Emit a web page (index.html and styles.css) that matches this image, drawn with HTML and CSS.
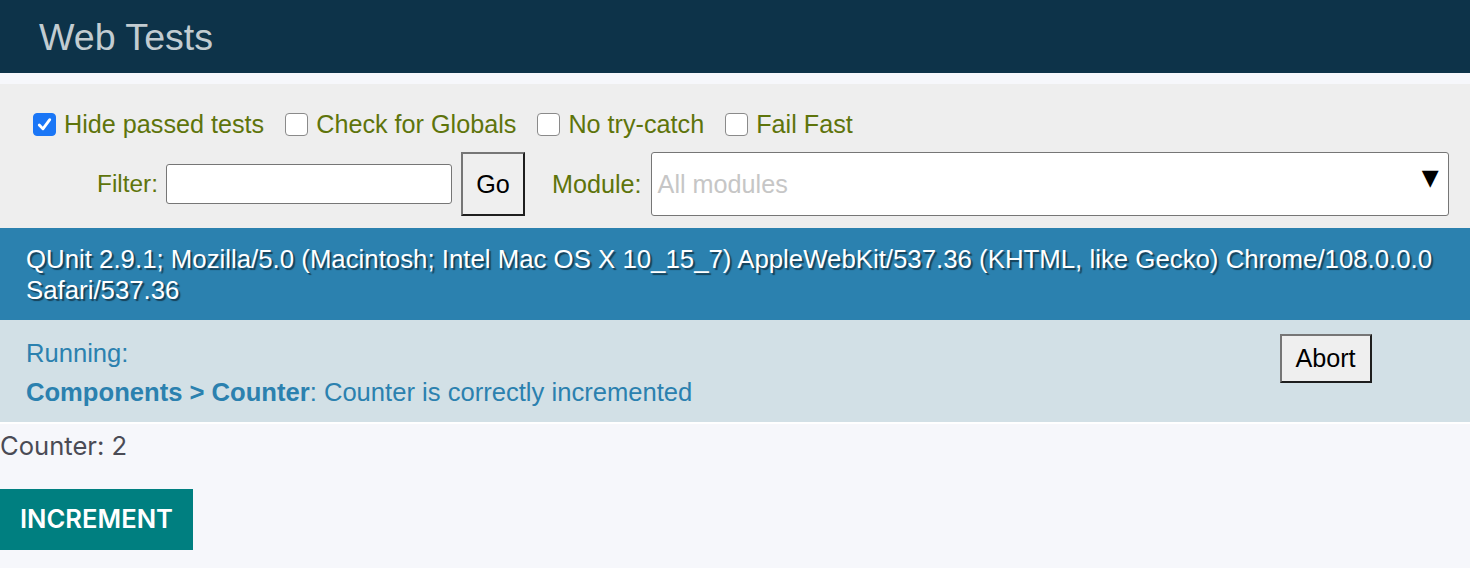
FILE: index.html
```html
<!DOCTYPE html>
<html>
<head>
<meta charset="utf-8">
<link rel="stylesheet" href="styles.css">
</head>
<body>
<div class="qunit">
  <h1 class="q-header">Web Tests</h1>
  <div class="q-banner"></div>
  <div class="q-toolbar">
    <div class="q-row q-row-checks">
      <label class="q-check"><span class="box checked"><svg viewBox="0 0 24 24" width="24" height="24"><path d="M6 12.5 L10.2 17 L18 6.5" fill="none" stroke="#fff" stroke-width="3.2" stroke-linecap="round" stroke-linejoin="round"/></svg></span>Hide passed tests</label>
      <label class="q-check"><span class="box"></span>Check for Globals</label>
      <label class="q-check"><span class="box"></span>No try-catch</label>
      <label class="q-check"><span class="box"></span>Fail Fast</label>
    </div>
    <div class="q-row q-row-filters">
      <span class="q-label q-filter-label">Filter:</span>
      <span class="q-input"></span>
      <span class="q-btn q-go">Go</span>
      <span class="q-label q-module-label">Module:</span>
      <div class="q-select"><span class="q-placeholder">All modules</span><span class="q-arrow">▼</span></div>
    </div>
  </div>
  <div class="q-useragent">QUnit 2.9.1; Mozilla/5.0 (Macintosh; Intel Mac OS X 10_15_7) AppleWebKit/537.36 (KHTML, like Gecko) Chrome/108.0.0.0 Safari/537.36</div>
  <div class="q-result">
    <div class="q-result-display">Running:<br><span class="q-module">Components &gt; Counter</span>: Counter is correctly incremented</div>
    <div class="q-result-controls"><span class="q-btn q-abort">Abort</span></div>
  </div>
</div>
<div class="app">
  <p class="counter">Counter: 2</p>
  <button class="inc">INCREMENT</button>
</div>
</body>
</html>
```

FILE: styles.css
```css
html, body {
  margin: 0;
  padding: 0;
  background: #f6f7fb;
}
.qunit {
  font-family: "Liberation Sans", Arial, sans-serif;
  font-size: 24px;
}
.q-header {
  margin: 0;
  height: 73px;
  box-sizing: border-box;
  padding: 2px 0 0 39px;
  display: flex;
  align-items: center;
  background: #0d3349;
  color: #c2ccd1;
  font-family: "Liberation Sans", Arial, sans-serif;
  font-weight: 400;
  font-size: 37.6px;
  line-height: 37px;
}
.q-banner {
  height: 11px;
}
.q-toolbar {
  background: #eeeeee;
  color: #5e740b;
  padding: 26px 0 12px 0;
  display: flex;
  flex-direction: column;
  gap: 14px;
}
.q-row {
  display: flex;
  align-items: center;
}
.q-row-checks {
  height: 28px;
  padding-left: 33px;
  gap: 21px;
  font-size: 25.2px;
}
.q-check {
  display: flex;
  align-items: center;
  gap: 8px;
}
.box {
  width: 23px;
  height: 23px;
  box-sizing: border-box;
  border: 1px solid #8a8a8a;
  border-radius: 4px;
  background: #fff;
  display: flex;
  align-items: center;
  justify-content: center;
}
.box.checked {
  background: #1a76f6;
  border-color: #1a76f6;
}
.box svg {
  width: 21px;
  height: 21px;
}
.q-row-filters {
  height: 64px;
  padding-left: 97px;
  font-size: 25.2px;
}
.q-filter-label {
  font-size: 24.4px;
}
.q-input {
  width: 286px;
  height: 40px;
  box-sizing: border-box;
  border: 1px solid #767676;
  border-radius: 3px;
  background: #fff;
  margin-left: 8px;
}
.q-btn {
  display: flex;
  align-items: center;
  justify-content: center;
  box-sizing: border-box;
  background: #efefef;
  color: #000;
  border: 2px solid;
  border-color: #767676 #1e1e1e #1e1e1e #767676;
  font-size: 25.2px;
}
.q-go {
  width: 64px;
  height: 64px;
  margin-left: 9px;
}
.q-module-label {
  margin-left: 27px;
}
.q-select {
  width: 798px;
  height: 64px;
  box-sizing: border-box;
  margin-left: 9px;
  border: 1px solid #767676;
  border-radius: 3px;
  background: #fff;
  display: flex;
  justify-content: space-between;
  align-items: center;
  padding: 0 9px 0 6px;
}
.q-placeholder {
  color: #c6c6c6;
}
.q-arrow {
  color: #000;
  font-family: "DejaVu Sans", sans-serif;
  font-size: 22px;
  line-height: 22px;
  align-self: flex-start;
  margin-top: 14px;
}
.q-useragent {
  background: #2b81af;
  color: #fff;
  padding: 16px 26px 14px 26px;
  line-height: 31px;
  font-size: 25.8px;
  text-shadow: rgba(0, 0, 0, 0.5) 2px 2px 1px;
}
.q-result {
  background: #d2e0e6;
  color: #2b81af;
  display: flex;
  height: 104px;
  box-sizing: border-box;
  border-bottom: 2px solid #fff;
  font-size: 25.6px;
}
.q-result-display {
  width: 85%;
  box-sizing: border-box;
  padding: 14px 26px 0 26px;
  line-height: 39px;
}
.q-module {
  font-weight: 700;
}
.q-result-controls {
  width: 10%;
  box-sizing: border-box;
  padding: 14px 0 0 30px;
}
.q-abort {
  width: 92px;
  height: 49px;
}
.app {
  font-family: Inter, "Liberation Sans", sans-serif;
  color: #4a4b55;
}
.counter {
  margin: 0;
  font-size: 25.6px;
  line-height: 44px;
}
.inc {
  margin-top: 21px;
  width: 193px;
  height: 61px;
  border: none;
  background: #007f80;
  color: #fff;
  font-family: Inter, "Liberation Sans", sans-serif;
  font-weight: 600;
  font-size: 25.6px;
  padding: 0 0 2px 0;
  display: block;
}
```
